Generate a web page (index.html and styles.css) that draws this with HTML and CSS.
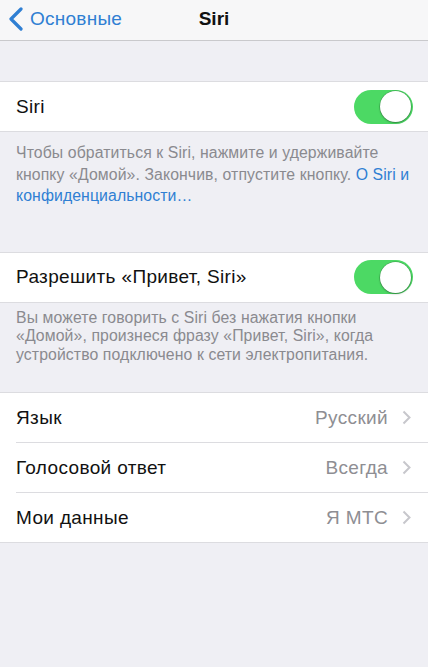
FILE: index.html
```html
<!DOCTYPE html>
<html lang="ru">

<head>
  <meta charset="UTF-8">
  <meta name="viewport" content="width=device-width, initial-scale=1.0">
  <title>Siri</title>

  <link rel="stylesheet" href="styles.css">
</head>

<body>
  <div class="navbar">
    <div class="nav-back">
      <svg width="16" height="24" viewBox="0 0 16 24">
        <polyline points="13,2 3,12 13,22" fill="none" stroke="#2f7fd3" stroke-width="3.2" stroke-linecap="round" stroke-linejoin="round" />
      </svg>
      <span>Основные</span>
    </div>
    <div class="nav-title">Siri</div>
    <div></div>
  </div>

  <div class="group group-first">
    <div class="cell">
      <div class="cell-body">
        <span class="cell-label">Siri</span>
        <div class="switch"><div class="knob"></div></div>
      </div>
    </div>
  </div>
  <p class="footer footer-wide">
    Чтобы обратиться к Siri, нажмите и удерживайте кнопку «Домой». Закончив, отпустите кнопку. <a href="#">О Siri и конфиденциальности…</a>
  </p>

  <div class="group group-second">
    <div class="cell">
      <div class="cell-body">
        <span class="cell-label">Разрешить «Привет, Siri»</span>
        <div class="switch"><div class="knob"></div></div>
      </div>
    </div>
  </div>
  <p class="footer footer-tight">
    Вы можете говорить с Siri без нажатия кнопки «Домой», произнеся фразу «Привет, Siri», когда устройство подключено к сети электропитания.
  </p>

  <div class="group group-third">
    <div class="cell">
      <div class="cell-body link">
        <span class="cell-label">Язык</span>
        <span class="cell-value">Русский</span>
        <svg class="chevron" width="9" height="15" viewBox="0 0 9 15">
          <polyline points="1.5,1.5 7.5,7.5 1.5,13.5" fill="none" stroke="#c7c7cc" stroke-width="2" />
        </svg>
      </div>
    </div>
    <div class="cell">
      <div class="cell-body link">
        <span class="cell-label">Голосовой ответ</span>
        <span class="cell-value">Всегда</span>
        <svg class="chevron" width="9" height="15" viewBox="0 0 9 15">
          <polyline points="1.5,1.5 7.5,7.5 1.5,13.5" fill="none" stroke="#c7c7cc" stroke-width="2" />
        </svg>
      </div>
    </div>
    <div class="cell">
      <div class="cell-body link">
        <span class="cell-label">Мои данные</span>
        <span class="cell-value">Я МТС</span>
        <svg class="chevron" width="9" height="15" viewBox="0 0 9 15">
          <polyline points="1.5,1.5 7.5,7.5 1.5,13.5" fill="none" stroke="#c7c7cc" stroke-width="2" />
        </svg>
      </div>
    </div>
  </div>
</body>

</html>
```

FILE: styles.css
```css
* {
  padding: 0;
  margin: 0;
  box-sizing: border-box;
  font-family: 'Liberation Sans', Arial, sans-serif;
}

body {
  background-color: #efeff4;
  width: 428px;
  min-height: 667px;
}

.navbar {
  display: grid;
  grid-template-columns: 1fr auto 1fr;
  align-items: center;
  height: 41px;
  padding-bottom: 2px;
  background-color: #f7f7f8;
  border-bottom: 1px solid #c9c9cc;
}

.nav-back {
  display: flex;
  align-items: center;
  gap: 6px;
  padding-left: 8px;
  color: #2f7fd3;
  font-size: 19px;
  letter-spacing: 0.25px;
}

.nav-title {
  font-size: 19px;
  font-weight: bold;
  color: #111;
}

.group {
  background-color: white;
  border-top: 1px solid #dcdce0;
  border-bottom: 1px solid #dcdce0;
}

.group-first {
  margin-top: 40px;
}

.group-second {
  margin-top: 45px;
}

.group-third {
  margin-top: 28px;
}

.cell {
  padding-left: 16px;
}

.cell-body {
  display: flex;
  align-items: center;
  height: 50px;
  padding-right: 15px;
  border-bottom: 1px solid #dcdce0;
}

.cell:last-child .cell-body {
  border-bottom: none;
  height: 49px;
}

.cell-label {
  flex: 1;
  font-size: 19px;
  letter-spacing: 0.35px;
  color: #111;
}

.cell-value {
  font-size: 19px;
  letter-spacing: 0.35px;
  color: #8e8e93;
  margin-right: 14px;
}

.link {
  padding-right: 17px;
}

.switch {
  display: flex;
  justify-content: flex-end;
  align-items: center;
  width: 59px;
  height: 34px;
  padding-right: 2px;
  border-radius: 17px;
  background-color: #4cd964;
}

.knob {
  width: 31px;
  height: 31px;
  border-radius: 50%;
  background-color: white;
  box-shadow: 0 0 0 0.5px rgba(0, 0, 0, 0.25), 0 1px 2px rgba(0, 0, 0, 0.3);
}

.footer {
  padding: 9px 16px 0 16px;
  font-size: 15.8px;
  letter-spacing: 0.1px;
  line-height: 19px;
  color: #8a8a8f;
}

.footer-wide {
  padding-top: 10px;
  line-height: 21.5px;
}

.footer-tight {
  padding-top: 6px;
  line-height: 18.5px;
}

.footer a {
  color: #2f7fd3;
  text-decoration: none;
}
```
